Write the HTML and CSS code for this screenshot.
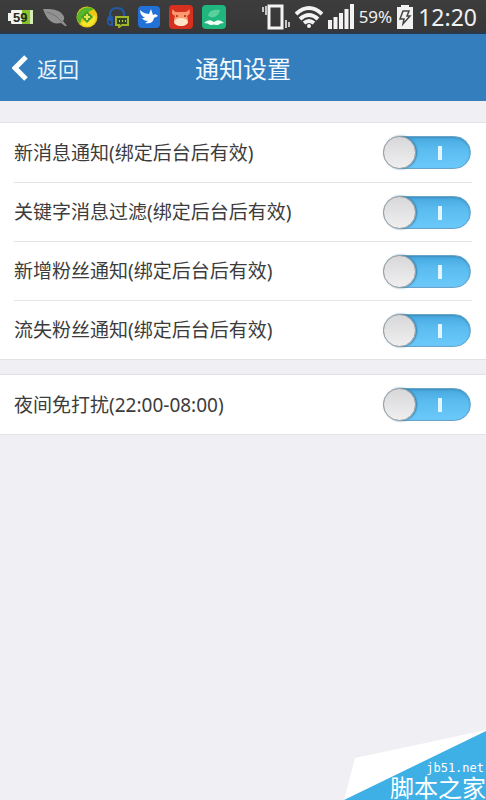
FILE: index.html
```html
<!DOCTYPE html>
<html lang="zh-CN">
<head>
<meta charset="utf-8">
<meta name="viewport" content="width=device-width, initial-scale=1">
<title>通知设置</title>
<link rel="stylesheet" href="styles.css">
</head>
<body>
<div class="status">
  <div class="apps">
    <svg width="26" height="16" viewBox="0 0 26 16"><path d="M4 1h20q1 0 1 1v12q0 1-1 1H4q-1 0-1-1v-2H0V4h3V2q0-1 1-1z" fill="#f1f3ee"/><path d="M14 1h10q1 0 1 1v12q0 1-1 1H14z" fill="#8ac32c"/><path d="M22 1h3v14h-3z" fill="#d5ecb4"/><text class="level" x="5" y="13">59</text></svg>
    <svg width="24" height="20" viewBox="0 0 24 20"><path d="M0 2c8 0 16 0 20 6 2 3 1 5 0 6l4 5h-2l-4-3C9 18 4 13 0 2z" fill="#919191"/><path d="M4 5c6 2 11 5 15 10" fill="none" stroke="#707070"/></svg>
    <svg width="22" height="22" viewBox="0 0 22 22"><circle cx="11" cy="11" r="10.500" fill="#edc916"/><path d="M1 14C-1 4 11-2 18 3L7 9l-3 9z" fill="#58b729"/><path d="M5 17l14-8c2 4-1 10-6 11-4 1-7-1-8-3z" fill="#f4e62c"/><path d="M11 5l6 6-6 6-6-6z" fill="#4c9d28"/><path d="M11 8v6M8 11h6" stroke="#dde94e" stroke-width="2"/></svg>
    <svg width="22" height="22" viewBox="0 0 22 22"><path d="M3 15V9q0-7 7-7t7 7v3M3 10q-3 2-2 6 0 3 4 3V11z" fill="none" stroke="#2459a5" stroke-width="2"/><path d="M9 11h12v8h-6l-3 2v-2H9z" fill="#33421e" stroke="#9fb526" stroke-width="2"/><path d="M12 15h7" stroke="#bfcc4a" stroke-width="2" stroke-dasharray="1 2"/></svg>
    <svg width="22" height="22" viewBox="0 0 22 22"><rect width="22" height="22" rx="4" fill="#2271d7"/><path d="M2 4c3 3 7 4 9 4l2-5 2 6c2-1 3-1 5 1l-4 2c-1 5-5 6-9 5l3-2c-3 0-5-1-6-3h3C4 10 2 8 2 4z" fill="#fff"/></svg>
    <svg width="24" height="24" viewBox="0 0 24 24"><rect width="24" height="24" rx="4" fill="#d8301e"/><path d="M4 4c1 3 3 3 5 3h6c2 0 4 0 5-3 2 4 0 6-2 7 2 5 1 10-6 10S4 16 6 11C3 9 2 8 4 4z" fill="#ff9870"/><ellipse cx="12" cy="17" rx="7" ry="4" fill="#ffe5c7"/><path d="M8 10v2M16 10v2" stroke="#b24a30" stroke-width="2"/></svg>
    <svg width="24" height="24" viewBox="0 0 24 24"><rect width="24" height="24" rx="4" fill="#20b77e"/><path d="M6 11c1-5 5-7 12-6-1 5-5 8-9 7z" fill="#5bd09d"/><path d="M2 18q5-5 10-1 5-4 10 1-4 0-6 2h-2q-2-1-4 0H8q-2-2-6-2z" fill="#f2fff5"/></svg>
  </div>
  <div class="system">
    <svg width="28" height="26" viewBox="0 0 28 26" fill="none" stroke="#f3f3f3"><rect x="7" y="2" width="13" height="22" stroke-width="3"/><path d="M1 3v5M4 2v9M27 18v5M24 16v8" stroke-width="1.500"/></svg>
    <svg width="28" height="24" viewBox="0 0 28 24" fill="none" stroke="#f3f3f3" stroke-width="4"><path d="M1 9q13-12 26 0M5 14q9-8 18 0M9 18q5-4 10 0"/><circle cx="14" cy="21" r="2" fill="#f3f3f3" stroke="none"/></svg>
    <svg width="26" height="26" viewBox="0 0 26 26" fill="#f3f3f3"><path d="M0 16h4v9H0zM5.500 13h4v12h-4zM11 9h4v16h-4zM16.500 5h4v20h-4zM22 0h4v25h-4z"/></svg>
    <span class="percent">59%</span>
    <svg width="16" height="24" viewBox="0 0 16 24"><path d="M4 0h8v2h4v22H0V2h4z" fill="#f1f1f1"/><path d="M6 6h6l-2 5h3l-7 8 1-5H3z" fill="none" stroke="#444" stroke-width="1.500"/></svg>
    <span class="clock">12:20</span>
  </div>
</div>
<header class="bar">
  <button class="back" type="button"><svg width="16" height="26" viewBox="0 0 16 26"><path d="M14 2L3 13l11 11" fill="none" stroke="#fff" stroke-width="5"/></svg>返回</button>
  <h1>通知设置</h1>
</header>
<main>
  <section class="group">
    <label class="row"><span>新消息通知(绑定后台后有效)</span><input class="switch" type="checkbox" checked></label>
    <label class="row"><span>关键字消息过滤(绑定后台后有效)</span><input class="switch" type="checkbox" checked></label>
    <label class="row"><span>新增粉丝通知(绑定后台后有效)</span><input class="switch" type="checkbox" checked></label>
    <label class="row"><span>流失粉丝通知(绑定后台后有效)</span><input class="switch" type="checkbox" checked></label>
  </section>
  <section class="group">
    <label class="row"><span>夜间免打扰(22:00-08:00)</span><input class="switch" type="checkbox" checked></label>
  </section>
</main>
<div class="corner">
  <svg class="fold" width="142" height="70" viewBox="0 0 142 70"><path d="M0 70L11 28 142 0v5z" fill="#fff"/><path d="M0 70L142 1v69z" fill="#3eb0e6"/></svg>
  <span class="site">jb51.net</span>
  <span class="name">脚本之家</span>
</div>
</body>
</html>
```
FILE: styles.css
```css
*, *::before, *::after { box-sizing: border-box; }

body {
  margin: 0;
  min-height: 100vh;
  position: relative;
  background: #efeff4;
  color: #3c3c3c;
  font-family: "Noto Sans", "Noto Sans CJK SC", sans-serif;
}

svg { display: block; flex: none; }

.status {
  display: flex;
  align-items: center;
  justify-content: space-between;
  height: 34px;
  padding: 0 9px 0 8px;
  background: linear-gradient(#3d3d3d, #373737 90%, #283850);
  color: #f0f0f0;
}

.apps { display: flex; align-items: center; gap: 9px; }
.level { font: bold 13px "Liberation Sans", sans-serif; fill: #262b22; }
.system { display: flex; align-items: center; gap: 5px; }
.percent { font-size: 17px; line-height: 24px; }
.clock { font-size: 23px; line-height: 32px; }

.bar {
  display: grid;
  grid-template-columns: 1fr auto 1fr;
  align-items: center;
  height: 67px;
  padding: 0 12px;
  background: #357ebd;
  color: #f2faff;
}

.back {
  display: flex;
  align-items: center;
  justify-self: start;
  gap: 9px;
  padding: 0;
  border: 0;
  background: none;
  color: #e6f5ff;
  font: 21px/30px "Noto Sans CJK SC", sans-serif;
}

h1 {
  margin: 0;
  font: 24px/36px "Noto Sans CJK SC", sans-serif;
}

main {
  display: grid;
  gap: 14px;
  padding-top: 21px;
}

.group {
  padding: 0 14px;
  border-top: 1px solid #e2e2e6;
  border-bottom: 1px solid #e2e2e6;
  background: #fff;
}

.row {
  display: flex;
  align-items: center;
  justify-content: space-between;
  height: 59px;
  font-size: 19px;
  line-height: 28px;
  white-space: nowrap;
}

.row + .row { border-top: 1px solid #e5e5e8; }

.switch {
  appearance: none;
  position: relative;
  flex: none;
  width: 88px;
  height: 33px;
  margin: 0 1px 0 0;
  border: 1px solid #6aa5c9;
  border-radius: 17px;
  background: linear-gradient(#46a9df, #5bbcf0 40%, #6cc9fa);
  box-shadow: inset 0 1px 2px #3f8dbb;
}

.switch::before {
  content: "";
  position: absolute;
  top: -1px;
  left: -1px;
  width: 33px;
  height: 33px;
  border: 1px solid #a0a0a0;
  border-radius: 50%;
  background: linear-gradient(#d8d8da, #efeff0);
  box-shadow: 1px 0 2px #397da6;
}

.switch::after {
  content: "";
  position: absolute;
  top: 9px;
  left: 54px;
  width: 4px;
  height: 14px;
  background: #e3f6ff;
}

.switch:not(:checked) { background: #ddd; box-shadow: none; }

.corner {
  position: absolute;
  right: 0;
  bottom: 0;
  display: flex;
  flex-direction: column;
  align-items: flex-end;
  color: #fff;
}

.fold { position: absolute; right: 0; bottom: 0; }
.site, .name { position: relative; }
.site { padding-right: 2px; font: 12px/12px "DejaVu Sans Mono", monospace; }
.name { font: 24px/26px "Noto Sans CJK SC", sans-serif; }
```
